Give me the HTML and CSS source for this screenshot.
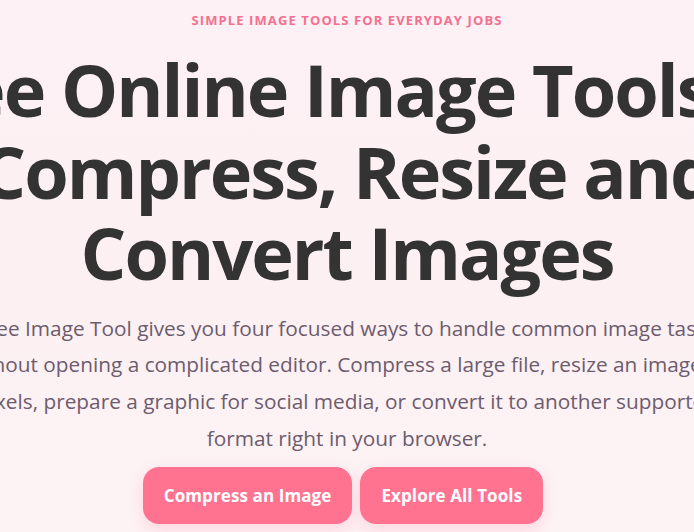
FILE: index.html
```html
<!DOCTYPE html>
<html lang="en">
<head>
<meta charset="utf-8">
<title>Free Online Image Tools</title>
<link rel="stylesheet" href="styles.css">
</head>
<body>
<section class="hero">
  <p class="eyebrow">Simple image tools for everyday jobs</p>
  <h1 class="title">Free Online Image Tools to<br>Compress, Resize and<br>Convert Images</h1>
  <p class="lead">Free Image Tool gives you four focused ways to handle common image tasks<br>without opening a complicated editor. Compress a large file, resize an image by<br>pixels, prepare a graphic for social media, or convert it to another supported<br>format right in your browser.</p>
  <div class="actions">
    <a class="btn" href="#">Compress an Image</a>
    <a class="btn" href="#">Explore All Tools</a>
  </div>
</section>
</body>
</html>
```

FILE: styles.css
```css
html, body {
  margin: 0;
  padding: 0;
}
body {
  width: 694px;
  height: 532px;
  overflow: hidden;
  background: linear-gradient(180deg, #fdf1f5 0%, #fcf0f3 60%, #fdf3f5 100%);
  font-family: "Open Sans", "Noto Sans", sans-serif;
}
.hero {
  display: flex;
  flex-direction: column;
  align-items: center;
  padding-top: 10px;
  text-align: center;
}
.eyebrow {
  margin: 0;
  font-size: 13px;
  line-height: 20px;
  font-weight: 700;
  letter-spacing: 1.1px;
  text-transform: uppercase;
  color: #f4708f;
  white-space: nowrap;
}
.title {
  margin: 19px 0 0;
  font-size: 72px;
  line-height: 81.5px;
  font-weight: 700;
  letter-spacing: -2px;
  color: #333333;
  white-space: nowrap;
}
.lead {
  margin: 16px 0 0;
  font-size: 20.8px;
  line-height: 36.8px;
  letter-spacing: 0;
  color: #6c5c6d;
  white-space: nowrap;
}
.actions {
  display: flex;
  gap: 8px;
  margin-top: 10px;
  padding-right: 8px;
}
.btn {
  display: block;
  padding: 16px 21px;
  font-size: 17px;
  line-height: 25px;
  font-weight: 700;
  color: #ffffff;
  text-decoration: none;
  background: #ff7391;
  border-radius: 16px;
  box-shadow: 0 6px 16px rgba(255, 115, 145, 0.22);
  letter-spacing: 0.1px;
}
```
